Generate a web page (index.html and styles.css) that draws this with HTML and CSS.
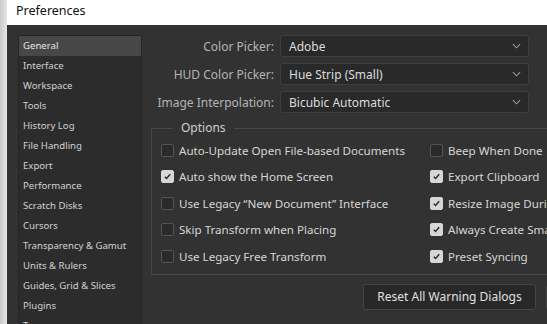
FILE: index.html
```html
<!DOCTYPE html>
<html>
<head>
<meta charset="utf-8">
<link rel="stylesheet" href="styles.css">
</head>
<body>
<div class="window">
  <div class="edge"></div>
  <div class="frame">
    <div class="titlebar">Preferences</div>
    <div class="content">
      <ul class="sidebar">
        <li class="active">General</li>
        <li>Interface</li>
        <li>Workspace</li>
        <li>Tools</li>
        <li>History Log</li>
        <li>File Handling</li>
        <li>Export</li>
        <li>Performance</li>
        <li>Scratch Disks</li>
        <li>Cursors</li>
        <li>Transparency &amp; Gamut</li>
        <li>Units &amp; Rulers</li>
        <li>Guides, Grid &amp; Slices</li>
        <li>Plugins</li>
        <li>Type</li>
      </ul>
      <div class="panel">
        <div class="form">
          <label class="lbl">Color Picker:</label>
          <div class="select"><span>Adobe</span><svg class="chev" viewBox="0 0 10 6" width="9" height="6"><path d="M1 1l4 4 4-4" fill="none" stroke="#9a9a9a" stroke-width="1.2"/></svg></div>
          <label class="lbl">HUD Color Picker:</label>
          <div class="select"><span>Hue Strip (Small)</span><svg class="chev" viewBox="0 0 10 6" width="9" height="6"><path d="M1 1l4 4 4-4" fill="none" stroke="#9a9a9a" stroke-width="1.2"/></svg></div>
          <label class="lbl">Image Interpolation:</label>
          <div class="select"><span>Bicubic Automatic</span><svg class="chev" viewBox="0 0 10 6" width="9" height="6"><path d="M1 1l4 4 4-4" fill="none" stroke="#9a9a9a" stroke-width="1.2"/></svg></div>
        </div>
        <fieldset class="options">
          <legend>Options</legend>
          <div class="cols">
            <div class="col col1">
              <div class="row"><span class="box"></span>Auto-Update Open File-based Documents</div>
              <div class="row"><span class="box on"><svg viewBox="0 0 10 10" width="9" height="9"><path d="M2 5.2l2 2 4-4.6" fill="none" stroke="#2a2a2a" stroke-width="1.6"/></svg></span>Auto show the Home Screen</div>
              <div class="row"><span class="box"></span>Use Legacy “New Document” Interface</div>
              <div class="row"><span class="box"></span>Skip Transform when Placing</div>
              <div class="row"><span class="box"></span>Use Legacy Free Transform</div>
            </div>
            <div class="col col2">
              <div class="row"><span class="box"></span>Beep When Done</div>
              <div class="row"><span class="box on"><svg viewBox="0 0 10 10" width="9" height="9"><path d="M2 5.2l2 2 4-4.6" fill="none" stroke="#2a2a2a" stroke-width="1.6"/></svg></span>Export Clipboard</div>
              <div class="row"><span class="box on"><svg viewBox="0 0 10 10" width="9" height="9"><path d="M2 5.2l2 2 4-4.6" fill="none" stroke="#2a2a2a" stroke-width="1.6"/></svg></span>Resize Image During Paste/Place</div>
              <div class="row"><span class="box on"><svg viewBox="0 0 10 10" width="9" height="9"><path d="M2 5.2l2 2 4-4.6" fill="none" stroke="#2a2a2a" stroke-width="1.6"/></svg></span>Always Create Smart Objects when Placing</div>
              <div class="row"><span class="box on"><svg viewBox="0 0 10 10" width="9" height="9"><path d="M2 5.2l2 2 4-4.6" fill="none" stroke="#2a2a2a" stroke-width="1.6"/></svg></span>Preset Syncing</div>
            </div>
          </div>
        </fieldset>
        <div class="buttons">
          <button class="btn">Reset All Warning Dialogs</button>
          <button class="btn">Reset Preferences On Quit</button>
        </div>
      </div>
    </div>
  </div>
</div>
</body>
</html>
```
FILE: styles.css
```css
* { box-sizing: border-box; }
html, body { margin: 0; padding: 0; }
body {
  width: 547px;
  height: 324px;
  overflow: hidden;
  font-family: "Noto Sans", "Open Sans", sans-serif;
  background: #323232;
}
.window {
  display: flex;
  width: 547px;
  height: 324px;
}
.edge {
  width: 7px;
  flex: none;
  background: linear-gradient(to right, #c9c9c9, #e6e6e6);
}
.frame {
  flex: 1;
  display: flex;
  flex-direction: column;
  min-width: 0;
}
.titlebar {
  height: 25px;
  flex: none;
  background: #ffffff;
  color: #111;
  font-size: 12.5px;
  line-height: 22px;
  padding-left: 9px;
}
.content {
  flex: 1;
  display: flex;
  background: #323232;
  padding: 10px 0 0 11px;
  min-height: 0;
}
.sidebar {
  list-style: none;
  margin: 0;
  padding: 0;
  width: 124px;
  flex: none;
  background: #2c2c2c;
  border: 1px solid #242424;
  border-bottom: none;
  overflow: hidden;
}
.sidebar li {
  height: 20px;
  line-height: 20px;
  padding-left: 4px;
  font-size: 9.6px;
  color: #d2d2d2;
  white-space: nowrap;
}
.sidebar li.active {
  background: #474747;
  color: #e4e4e4;
}
.panel {
  flex: 1;
  min-width: 0;
  padding-left: 9px;
  display: flex;
  flex-direction: column;
}
.form {
  display: grid;
  grid-template-columns: 123px 249px;
  column-gap: 6px;
  row-gap: 6px;
  align-items: center;
}
.lbl {
  text-align: right;
  font-size: 12px;
  color: #b4b4b4;
  white-space: nowrap;
}
.select {
  height: 22px;
  background: #292929;
  border: 1px solid #3e3e3e;
  border-radius: 3px;
  display: flex;
  align-items: center;
  justify-content: space-between;
  padding: 0 7px 0 8px;
  font-size: 12px;
  color: #dcdcdc;
}
.chev { flex: none; }
.options {
  margin: 8px -20px 0 0;
  padding: 2px 0 4px 9px;
  border: 1px solid #474747;
  border-radius: 0;
  min-width: 0;
}
.options legend {
  margin-left: 12px;
  padding: 0 8px;
  font-size: 12px;
  color: #cfcfcf;
  line-height: 14px;
}
.cols {
  display: flex;
}
.col {
  display: flex;
  flex-direction: column;
  gap: 0;
}
.col1 { width: 269px; flex: none; }
.col2 { flex: 1; min-width: 0; }
.row {
  height: 26.5px;
  display: flex;
  align-items: center;
  font-size: 11.6px;
  color: #d6d6d6;
  white-space: nowrap;
}
.box {
  width: 13px;
  height: 13px;
  flex: none;
  border: 1px solid #545454;
  border-radius: 2px;
  background: #2a2a2a;
  margin-right: 5px;
  display: flex;
  align-items: center;
  justify-content: center;
}
.box.on {
  background: #d6d6d6;
  border-color: #d6d6d6;
}
.buttons {
  display: flex;
  gap: 10px;
  margin-top: 9px;
  padding-left: 212px;
}
.btn {
  flex: none;
  width: 173px;
  height: 26px;
  background: #282828;
  border: 1px solid #444;
  border-radius: 3px;
  color: #e0e0e0;
  font-family: inherit;
  font-size: 12px;
  padding: 0;
  white-space: nowrap;
}
```
